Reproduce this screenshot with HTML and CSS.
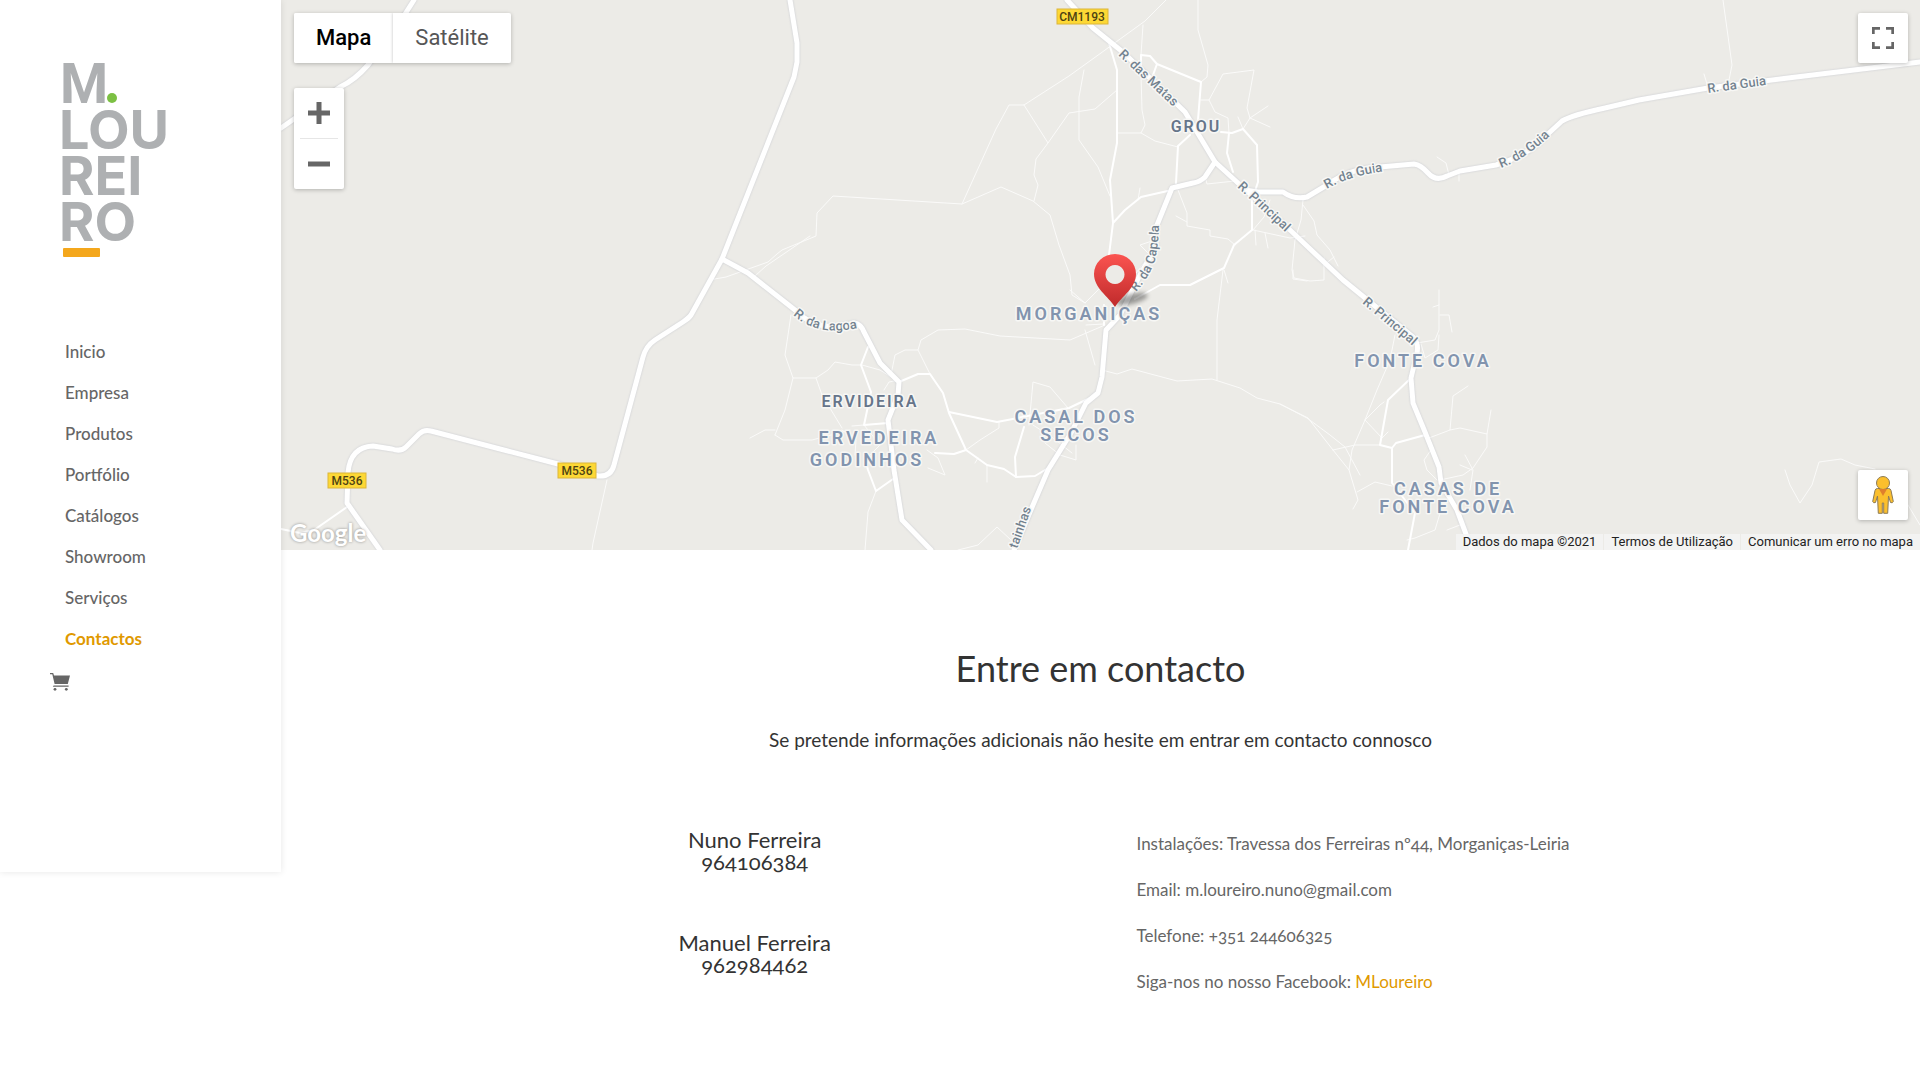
FILE: index.html
```html
<!DOCTYPE html>
<html lang="pt">
<head>
<meta charset="utf-8">
<title>Contactos – M. Loureiro</title>
<meta name="viewport" content="width=device-width, initial-scale=1">
<link rel="stylesheet" href="styles.css">
</head>
<body>
<header class="sidebar">
  <a class="logo" href="#" aria-label="M. Loureiro">
    <svg width="112" height="200" viewBox="0 0 112 200">
      <g class="logo-letters">
        <text x="-3" y="40" class="initial">M</text>
        <text x="-4" y="86">LOU</text>
        <text x="-4" y="132">REI</text>
        <text x="-4" y="178">RO</text>
      </g>
      <circle cx="49" cy="35" r="5" fill="#7cc043"/>
      <rect x="0" y="185" width="37" height="9" rx="1" fill="#f4a71c"/>
    </svg>
  </a>
  <nav>
    <ul class="menu">
      <li><a href="#">Inicio</a></li>
      <li><a href="#">Empresa</a></li>
      <li><a href="#">Produtos</a></li>
      <li><a href="#">Portfólio</a></li>
      <li><a href="#">Catálogos</a></li>
      <li><a href="#">Showroom</a></li>
      <li><a href="#">Serviços</a></li>
      <li><a class="current" href="#" aria-current="page">Contactos</a></li>
    </ul>
    <a class="cart" href="#" aria-label="Carrinho">
      <svg width="20" height="18" viewBox="0 0 20 18" fill="#666">
        <path d="M0 0h3.2l.8 2.5H20L17.8 11H4.6L2.3 1.3H0zM3.6 12.6H18.6V13.8H2.8z"/>
        <circle cx="5" cy="16.3" r="1.4"/><circle cx="16.3" cy="16.3" r="1.4"/>
      </svg>
    </a>
  </nav>
</header>

<main>
  <section class="map" aria-label="Mapa">
    <svg class="tiles" viewBox="281 0 1639 550" preserveAspectRatio="xMidYMid slice">
      <defs>
        <linearGradient id="pin" x1="0" y1="0" x2="0" y2="1"><stop offset="0" stop-color="#fb5450"/><stop offset="1" stop-color="#bf2a2b"/></linearGradient>
        <filter id="soft" x="-50%" y="-50%" width="200%" height="200%"><feGaussianBlur stdDeviation="2"/></filter>
        <path id="p-matas" d="M1118 55L1180 113"/>
        <path id="p-principal1" d="M1237 187L1295 241"/>
        <path id="p-principal2" d="M1362 303L1420 352"/>
        <path id="p-capela" d="M1136 292Q1146 281 1152 268Q1159 255 1159 216"/>
        <path id="p-lagoa" d="M793 315Q818 338 862 327"/>
        <path id="p-guia1" d="M1327 189Q1352 174 1395 170"/>
        <path id="p-guia2" d="M1501 168Q1528 158 1556 130"/>
        <path id="p-guia3" d="M1708 93L1780 83"/>
        <path id="p-tainhas" d="M1017 549L1036 495"/>
      </defs>

      <!-- tracks -->
      <g class="road track">
        <path d="M709 280L726 277L768 262L777 254L782 250L816 236L817 213L833 196L962 204L1001 187L1033 201L1050 215L1059 245L1070 275L1072 295L1085 303"/>
        <path d="M755 276L766 266L810 236"/>
        <path d="M962 204L996 129L1009 105H1024L1069 76L1101 53L1116 42L1145 21L1166 0M1024 105L1048 143L1069 113L1095 109L1117 90M1048 143L1036 159L1034 175L1038 185L1034 201M1084 70L1079 97V140L1098 167L1110 196"/>
        <path d="M1198 0V30L1208 65L1207 77L1201 82M1141 55L1143 25M1141 75L1142 110L1145 125L1141 133H1118M1141 133L1155 141L1178 147"/>
        <path d="M1201 100H1209L1223 74L1254 70L1247 108L1250 118L1243 129M1250 118L1268 106M1250 118L1270 127M1238 117L1243 129M1209 100L1215 112L1228 118L1229 133"/>
        <path d="M1178 190L1187 213V226L1210 230V236L1228 239L1235 245M1205 176L1207 184L1235 181M1176 216L1187 222M1138 200L1140 188"/>
        <path d="M1253 230L1264 217L1270 200M1253 230L1290 238L1305 236M1303 200L1301 220L1295 240L1292 270L1294 278L1310 281L1324 280V258M1303 205L1314 221L1317 235L1330 250L1338 266M1324 265L1334 257M1255 230L1256 245M1265 233L1268 248"/>
        <path d="M1723 0L1732 65L1729 80M1704 74L1707 84M1437 157L1446 163L1449 175M1459 172V181"/>
        <path d="M1115 300L1150 255L1140 245L1155 240M1070 290L1085 303L1100 288M1086 325L1104 324M1085 330L1095 365"/>
        <path d="M791 315L785 355L793 378H816L828 370L835 362L852 365H860M816 378L822 395L842 428M793 378L785 410L775 435M775 430L765 430L750 438M775 435L783 440L812 440L850 430"/>
        <path d="M891 375L895 355L905 350L918 350L921 340L938 330L965 329L1000 336L1070 340L1105 325M918 350L930 374M1102 370L1117 374L1132 369L1177 381L1212 379L1240 388L1257 398L1280 404L1307 418L1330 435L1345 447L1360 475"/>
        <path d="M1223 270L1217 320V380M1224 270L1228 283M1293 270V279L1307 281"/>
        <path d="M1029 425L1033 382L1050 387L1068 408M1045 443L1060 455L1076 460V445M999 422V428L980 440L966 450M927 450L938 458L945 475L928 468M987 465V482M975 463L978 458M1033 425L1053 438L1072 453"/>
        <path d="M862 365L880 370L899 382M852 426L864 425L880 445L870 455M842 430L856 440L855 455M876 491L868 512L865 550M958 550L978 545L997 527L1011 540M884 390L889 382L899 380"/>
        <path d="M1439 290V305L1433 307M1439 305V330L1435 340L1417 343M1440 315H1449L1452 332M1439 335L1438 350L1425 358L1421 344M1395 335L1390 360L1377 390L1365 420L1352 450L1349 470L1358 500L1353 509M1365 420L1380 405L1384 402M1365 420L1382 438L1388 432"/>
        <path d="M1468 386L1453 396L1450 430L1460 428L1487 434L1491 410M1429 438L1450 430M1487 434V447L1473 468L1463 475L1440 480M1280 404L1308 418L1333 450L1349 470M1333 450L1355 445L1380 445M1357 492L1375 482L1392 486M1431 450L1424 460L1427 470L1437 480M1465 455L1473 470L1470 490M1460 465L1472 470M1441 510L1435 530L1415 538L1407 540M1460 525L1447 530"/>
        <path d="M1785 470L1790 485L1800 503L1812 485L1819 462L1841 459L1855 465L1875 469M1905 500L1920 525M607 480L593 543L592 550"/>
      </g>

      <!-- local streets -->
      <g class="road street">
        <path d="M1109 43L1117 70V143L1110 180L1113 223L1109 255M1113 223L1125 210L1141 197L1172 190"/>
        <path d="M1141 70V55L1150 56L1157 64L1201 82L1198 120M1157 64L1153 75"/>
        <path d="M1190 135L1178 146L1176 183M1221 132L1232 133L1243 129L1257 145L1258 182L1252 200V230L1234 245L1224 268L1190 285H1160L1135 299M1229 133L1227 153L1233 172"/>
        <path d="M899 382L918 374H930L943 393L949 413L966 450L987 465L1004 469L1016 477L1035 476L1050 467"/>
        <path d="M949 412L997 422L1069 408L1090 398M1024 427L1015 457L1016 477M966 450L954 454L935 453"/>
        <path d="M868 347L861 365L871 392L864 425L888 423M864 455L868 470L876 491L893 479M1104 305V325"/>
        <path d="M1411 378L1388 400L1380 445L1392 448L1396 443L1425 435M1392 448V483L1415 513L1408 550"/>
        <path d="M347 507L314 530L300 533L281 529"/>
      </g>

      <!-- main roads -->
      <g class="road main">
        <path d="M790 0L797 43V62L794 77L722 259L691 315Q689 318 683 322L655 340Q646 346 643 357L614 465Q611 477 598 476L558 464L431 431Q424 429 419 434L406 447Q401 452 392 449L373 446Q350 447 348 473L347 503L380 550"/>
        <path d="M414 0L400 22L368 65Q355 80 340 87L281 128"/>
        <path d="M722 259L748 273L795 310Q818 334 854 323Q861 324 864 332L880 363L899 382L898 395L888 420L894 470L902 520L931 550"/>
        <path d="M1067 0L1093 28L1124 53L1185 112L1215 162L1238 183L1290 230L1343 280L1413 337Q1419 343 1417 353L1411 378L1413 403L1425 432L1439 467L1441 483L1457 510L1472 550"/>
        <path d="M1215 162L1205 177Q1200 182 1193 183L1172 188L1155 230L1156 247L1141 273L1120 315L1106 330L1102 377L1098 393L1086 403L1071 433L1048 470L1030 512L1014 550"/>
        <path d="M1245 190L1258 192H1283Q1294 200 1307 197L1327 185Q1350 168 1380 167L1414 164Q1421 165 1428 173Q1436 182 1447 176L1460 171L1496 165Q1530 155 1549 133L1562 121Q1572 115 1605 108L1639 100L1708 88L1788 78L1920 62"/>
      </g>

      <g class="street-names">
        <text><textPath href="#p-matas">R. das Matas</textPath></text>
        <text><textPath href="#p-principal1">R. Principal</textPath></text>
        <text><textPath href="#p-principal2">R. Principal</textPath></text>
        <text><textPath href="#p-capela">R. da Capela</textPath></text>
        <text><textPath href="#p-lagoa">R. da Lagoa</textPath></text>
        <text><textPath href="#p-guia1">R. da Guia</textPath></text>
        <text><textPath href="#p-guia2">R. da Guia</textPath></text>
        <text><textPath href="#p-guia3">R. da Guia</textPath></text>
        <text><textPath href="#p-tainhas">tainhas</textPath></text>
      </g>

      <g class="places">
        <text x="1089" y="320">MORGANIÇAS</text>
        <text x="1423" y="367">FONTE COVA</text>
        <text x="1076" y="423">CASAL DOS</text>
        <text x="1076" y="441">SECOS</text>
        <text x="879" y="444">ERVEDEIRA</text>
        <text x="867" y="466">GODINHOS</text>
        <text x="1448" y="495">CASAS DE</text>
        <text x="1448" y="513">FONTE COVA</text>
      </g>
      <g class="places village">
        <text x="1196" y="132">GROU</text>
        <text x="870" y="407">ERVIDEIRA</text>
      </g>

      <g class="shields">
        <rect x="1057" y="9" width="51" height="15"/><text x="1082" y="21">CM1193</text>
        <rect x="558" y="463" width="38" height="15"/><text x="577" y="475">M536</text>
        <rect x="328" y="473" width="38" height="15"/><text x="347" y="485">M536</text>
      </g>

      <ellipse cx="1132" cy="299" rx="16" ry="5" transform="rotate(-14 1132 299)" fill="#000" opacity=".35" filter="url(#soft)"/>
      <path fill="url(#pin)" fill-rule="evenodd" d="M1115 307C1108 296 1094 288 1094 274a21 20 0 0 1 42 0C1136 288 1122 296 1115 307zM1115 265a9.500 9.500 0 1 0 .01 0z"/>
    </svg>

    <div class="controls">
      <div class="controls-left">
        <div class="map-type">
          <button type="button" class="active">Mapa</button>
          <button type="button">Satélite</button>
        </div>
        <div class="zoom">
          <button type="button" aria-label="Ampliar"><svg width="22" height="22" viewBox="0 0 22 22"><path d="M8.500 0h5v8.500H22v5h-8.500V22h-5v-8.500H0v-5h8.500z"/></svg></button>
          <button type="button" aria-label="Reduzir"><svg width="22" height="22" viewBox="0 0 22 22"><path d="M0 8.500h22v5H0z"/></svg></button>
        </div>
      </div>
      <div class="controls-right">
        <button type="button" class="square" aria-label="Ecrã inteiro"><svg width="22" height="22" viewBox="0 0 22 22"><path d="M0 0h8v2.700H2.700V7H0zM14 0h8v7h-2.700V2.700H14zM0 15h2.700v4.300H8V22H0zM19.300 15H22v7h-8v-2.700h5.300z"/></svg></button>
        <button type="button" class="square" aria-label="Street View">
          <svg width="22" height="38" viewBox="0 0 22 38"><g fill="#fbbf2d" stroke="#8c7b56" stroke-width="1"><path d="M5.500 12.500h11q2 0 2.500 2l2.300 11q-.8 2-2.800 1L16.500 20l-.8 17.300h-4V27h-1.400v10.300h-4L5.500 20l-2 6.500q-2 1-2.800-1L3 14.500q.5-2 2.500-2z"/><circle cx="11" cy="7" r="6.500"/></g><path d="M7 13h8l-4 7z" fill="#e07f2c"/></svg>
        </button>
      </div>
    </div>
    <a class="google" href="#">Google</a>
    <div class="legal">
      <span>Dados do mapa ©2021</span>
      <a href="#">Termos de Utilização</a>
      <a href="#">Comunicar um erro no mapa</a>
    </div>
  </section>

  <section class="contact">
    <h1>Entre em contacto</h1>
    <p class="lead">Se pretende informações adicionais não hesite em entrar em contacto connosco</p>
    <div class="columns">
      <div class="people">
        <h2>Nuno Ferreira<br>964106384</h2>
        <h2>Manuel Ferreira<br>962984462</h2>
      </div>
      <div class="details">
        <p>Instalações: Travessa dos Ferreiras nº44, Morganiças-Leiria</p>
        <p>Email: m.loureiro.nuno@gmail.com</p>
        <p>Telefone: +351 244606325</p>
        <p>Siga-nos no nosso Facebook: <a href="#">MLoureiro</a></p>
      </div>
    </div>
  </section>
</main>
</body>
</html>
```
FILE: styles.css
```css
* { box-sizing: border-box; }

body {
  margin: 0;
  display: grid;
  grid-template-columns: 281px minmax(0, 1fr);
  align-items: start;
  background: #fff;
  color: #666;
  font-family: Lato, "Noto Sans", sans-serif;
  font-size: 17px;
  font-variant-numeric: oldstyle-nums;
}

a { color: inherit; text-decoration: none; }

/* Sidebar */
.sidebar {
  position: relative;
  z-index: 1;
  padding: 63px 50px 181px;
  background: #fff;
  box-shadow: 0 0 7px rgba(0, 0, 0, .1);
}
.logo { display: block; margin: 0 0 68px 13px; }
.logo svg { display: block; overflow: visible; }
.logo-letters { font: 700 54px Inter, sans-serif; fill: #aeb0b2; }
.logo-letters .initial { font: 700 55px Roboto, sans-serif; }
.menu {
  margin: 0 0 14px;
  padding: 0 0 0 15px;
  list-style: none;
  line-height: 41px;
  font-weight: 500;
}
.menu a { display: block; }
.menu .current { color: #e09900; font-weight: 700; }
.cart, .cart svg { display: block; }

/* Map */
.map {
  position: relative;
  height: 550px;
  overflow: hidden;
  background: #ecebe7;
  font-family: Roboto, sans-serif;
  font-variant-numeric: normal;
}
.tiles { display: block; width: 100%; height: 100%; }
.road { fill: none; stroke: #fff; stroke-linejoin: round; stroke-linecap: round; }
.track { stroke-width: 1; opacity: .75; }
.street { stroke-width: 2; }
.main { stroke-width: 5; filter: drop-shadow(0 0 1px rgba(120, 130, 160, .3)); }
.tiles text { paint-order: stroke; stroke: #f7f7f5; stroke-width: 3px; stroke-linejoin: round; }
.street-names { font-size: 13px; font-weight: 500; fill: #73828f; }
.places { font-size: 18px; font-weight: 600; fill: #8294ae; letter-spacing: 3px; text-anchor: middle; }
.village { font-size: 16px; fill: #66758a; letter-spacing: 2px; }
.shields { font-size: 12px; font-weight: 500; fill: #4d4212; text-anchor: middle; }
.shields rect { fill: #fdd835; stroke: #dcb63a; }
.shields text { stroke: none; }

.controls {
  position: absolute;
  inset: 13px 12px 30px 13px;
  display: flex;
  justify-content: space-between;
}
.controls-left { display: flex; flex-direction: column; align-items: flex-start; gap: 25px; }
.controls-right { display: flex; flex-direction: column; justify-content: space-between; }
.controls button {
  display: grid;
  place-items: center;
  padding: 0;
  border: 0;
  background: #fff;
  color: #565656;
  font: 22px Roboto, sans-serif;
}
.controls button svg { fill: #666; }
.map-type, .zoom, .square { border-radius: 2px; box-shadow: 0 1px 4px rgba(0, 0, 0, .25); background: #fff; }
.map-type { display: flex; overflow: hidden; }
.map-type button { height: 50px; padding: 0 22px 2px; }
.map-type button + button { box-shadow: 0 0 3px rgba(0, 0, 0, .25); }
.map-type .active { color: #000; font-weight: 500; }
.zoom { width: 50px; padding: 0 6px; }
.zoom button { width: 100%; height: 50px; }
.zoom button + button { height: 51px; border-top: 1px solid #e6e6e6; }
.controls .square { width: 50px; height: 50px; border-radius: 2px; }

.google {
  position: absolute;
  left: 9px;
  bottom: 2px;
  color: #fff;
  font: 700 24px/30px Lato, sans-serif;
  text-shadow: 0 0 3px rgba(0, 0, 0, .4);
}
.legal {
  position: absolute;
  right: 0;
  bottom: 0;
  display: flex;
  gap: 1px;
  color: #222;
  font-size: 13px;
  line-height: 16px;
}
.legal > * { padding: 0 7px; background: rgba(245, 245, 245, .8); }

/* Contact */
.contact { padding: 95px 10% 80px; color: #333; text-align: center; }
h1 { margin: 0 0 32px; font-size: 36px; font-weight: 400; line-height: 46px; }
.lead { margin: 0 0 72px; font-size: 19px; line-height: 34px; }
.columns { display: grid; grid-template-columns: 1fr 1fr; gap: 72px; }
.people { display: grid; align-content: start; gap: 59px; }
h2 { margin: 0; font-size: 22px; font-weight: 400; line-height: 22px; }
.details { display: grid; align-content: start; gap: 16px; color: #666; line-height: 30px; text-align: left; }
.details p { margin: 0; }
.details a { color: #e09900; }
```
